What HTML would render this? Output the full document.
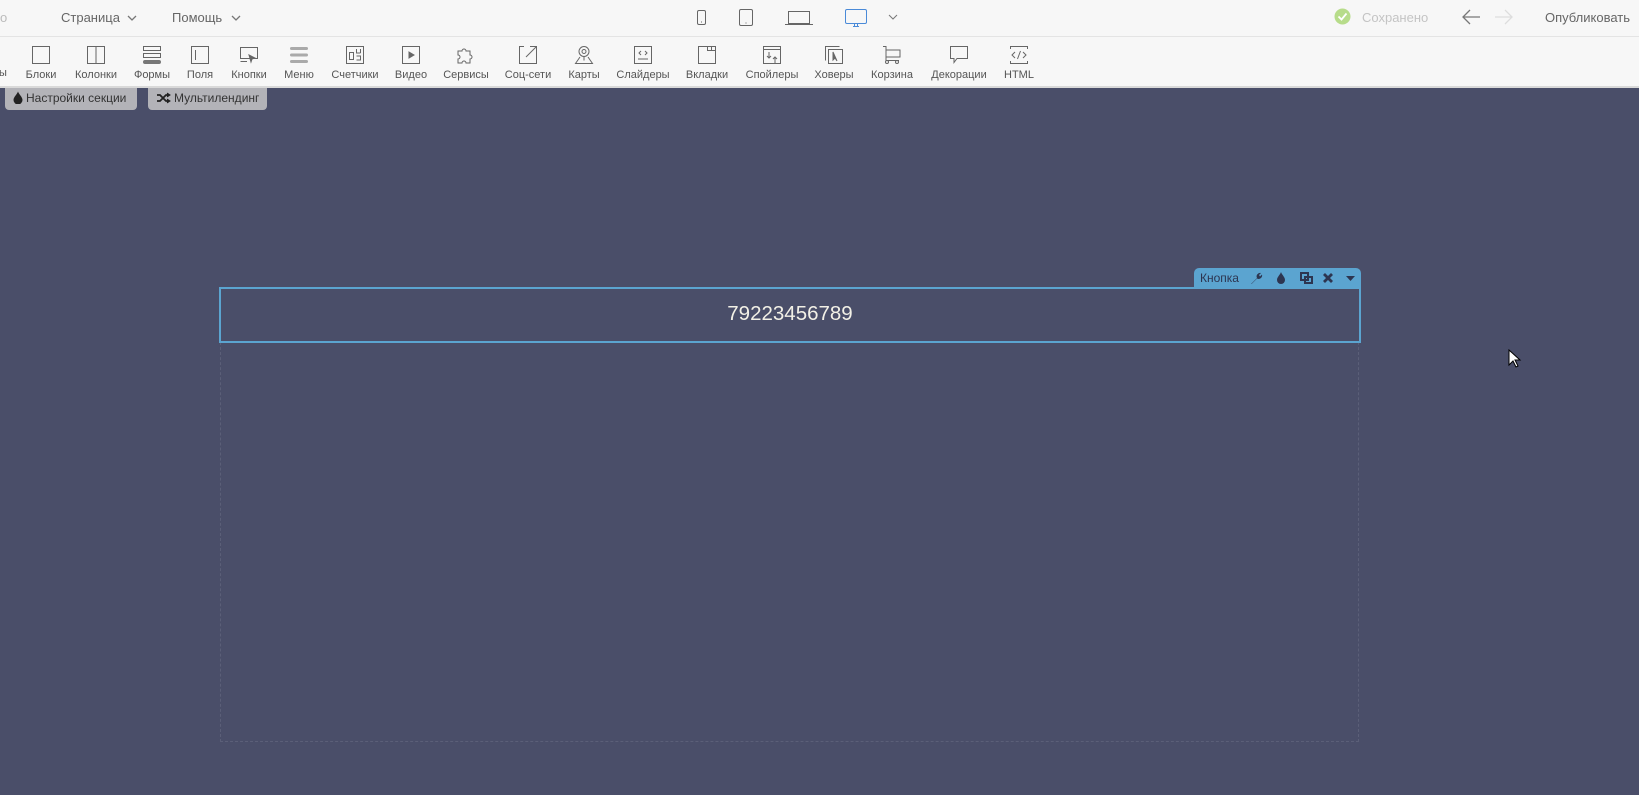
<!DOCTYPE html>
<html><head><meta charset="utf-8"><style>
*{margin:0;padding:0;box-sizing:border-box}
body{width:1639px;height:795px;overflow:hidden;background:#4a4e69;font-family:"Liberation Sans",sans-serif;position:relative}
.top{position:absolute;left:0;top:0;width:1639px;height:37px;background:#f7f7f7;border-bottom:1px solid #e4e4e4}
.tb{position:absolute;left:0;top:37px;width:1639px;height:51px;background:#f7f7f7;border-bottom:2px solid #d9d9d9}
.t{position:absolute;font-size:13px;color:#666;white-space:nowrap}
.it{position:absolute;top:8px;width:80px;text-align:center}
.it svg{display:block;margin:0 auto}
.it span{display:block;font-size:11px;color:#555;margin-top:4px;white-space:nowrap}
.chip{position:absolute;top:88px;height:22px;background:#b3b3b8;border-radius:0 0 4px 4px;font-size:12px;color:#333;line-height:21px;padding-left:8px;white-space:nowrap}
.chip svg{vertical-align:-2px;margin-right:3px}
</style></head><body>
<div class="top">
<div class="t" style="left:0;top:10px;color:#bbb">о</div>
<div class="t" style="left:61px;top:10px">Страница</div>
<svg style="position:absolute;left:127px;top:14px" width="10" height="8" fill="none" stroke="#777" stroke-width="1.3"><polyline points="1,2 5,6 9,2"/></svg>
<div class="t" style="left:172px;top:10px">Помощь</div>
<svg style="position:absolute;left:231px;top:14px" width="10" height="8" fill="none" stroke="#777" stroke-width="1.3"><polyline points="1,2 5,6 9,2"/></svg>
<svg style="position:absolute;left:690px;top:8px" width="220" height="20" viewBox="690 8 220 20" fill="none" stroke="#666" stroke-width="1">
<rect x="697.5" y="10.5" width="8" height="14" rx="1.5"/><line x1="701" y1="22" x2="702" y2="22"/>
<rect x="739.5" y="9.5" width="13" height="16" rx="1.5"/><line x1="745.5" y1="23" x2="746.5" y2="23"/>
<rect x="788.5" y="11.5" width="21" height="12"/><line x1="785" y1="24.5" x2="813" y2="24.5"/>
<g stroke="#4a8ad8"><rect x="845.5" y="9.5" width="21" height="14" rx="1.5"/><line x1="853" y1="26.5" x2="859" y2="26.5"/><line x1="854.5" y1="24" x2="854.5" y2="26"/><line x1="857.5" y1="24" x2="857.5" y2="26"/></g>
<polyline points="889,15 893,19 897,15" stroke="#777"/>
</svg>
<svg style="position:absolute;left:1334px;top:8px" width="17" height="17"><circle cx="8.5" cy="8.5" r="8" fill="#b7dc8a"/><polyline points="4.5,8.5 7.5,11.5 12.5,5.5" fill="none" stroke="#fff" stroke-width="1.8"/></svg>
<div class="t" style="left:1362px;top:10px;color:#c4c4c4">Сохранено</div>
<svg style="position:absolute;left:1462px;top:8px" width="52" height="18" fill="none" stroke-width="1.3"><g stroke="#777"><line x1="1" y1="9" x2="18" y2="9"/><polyline points="8,2 1,9 8,16"/></g><g stroke="#ddd"><line x1="33" y1="9" x2="50" y2="9"/><polyline points="43,2 50,9 43,16"/></g></svg>
<div class="t" style="left:1545px;top:10px">Опубликовать</div>
</div>
<div class="tb">
<div class="it" style="left:-37px"><svg width="18" height="18"></svg><span>ы</span></div>
<div class="it" style="left:1px"><svg width="20" height="20" fill="none" stroke="#666"><rect x="1.5" y="1.5" width="17" height="17"/></svg><span>Блоки</span></div>
<div class="it" style="left:56px"><svg width="20" height="20" fill="none" stroke="#666"><rect x="1.5" y="1.5" width="17" height="17"/><line x1="10" y1="1.5" x2="10" y2="18.5"/></svg><span>Колонки</span></div>
<div class="it" style="left:112px"><svg width="20" height="20" fill="none" stroke="#666"><rect x="1.5" y="1.5" width="17" height="4"/><rect x="1.5" y="8.5" width="17" height="4"/><rect x="1" y="15" width="18" height="4" fill="#777" stroke="none" rx="2"/></svg><span>Формы</span></div>
<div class="it" style="left:160px"><svg width="20" height="20" fill="none" stroke="#666"><rect x="1.5" y="1.5" width="17" height="17"/><line x1="5.5" y1="5" x2="5.5" y2="15"/></svg><span>Поля</span></div>
<div class="it" style="left:209px"><svg width="20" height="20" fill="none" stroke="#666"><rect x="1.5" y="2.5" width="17" height="11"/><line x1="1.5" y1="16.5" x2="8" y2="16.5"/><path d="M10 10l6 3-3 1-1 3z" fill="#666"/></svg><span>Кнопки</span></div>
<div class="it" style="left:259px"><svg width="20" height="20"><rect x="1" y="2" width="18" height="3" rx="1.5" fill="#aaa"/><rect x="1" y="8.5" width="18" height="3" rx="1.5" fill="#aaa"/><rect x="1" y="15" width="18" height="3" rx="1.5" fill="#aaa"/></svg><span>Меню</span></div>
<div class="it" style="left:315px"><svg width="20" height="20" fill="none" stroke="#666"><rect x="1.5" y="1.5" width="17" height="17"/><rect x="4.5" y="7.5" width="4" height="7"/><path d="M11.5 4v4h4M15.5 4v4M11.5 11h4v4h-4"/></svg><span>Счетчики</span></div>
<div class="it" style="left:371px"><svg width="20" height="20" fill="none" stroke="#666"><rect x="1.5" y="1.5" width="17" height="17"/><path d="M8 7l5 3-5 3z" fill="#666"/></svg><span>Видео</span></div>
<div class="it" style="left:426px"><svg width="20" height="20" fill="none" stroke="#666"><path d="M2 6h4a2 2 0 1 1 4 0h4v4a2 2 0 1 1 0 4v4h-4a2 2 0 1 0-4 0H2v-4a2 2 0 1 0 0-4z"/></svg><span>Сервисы</span></div>
<div class="it" style="left:488px"><svg width="20" height="20" fill="none" stroke="#666"><path d="M12 1.5H18.5V18.5H1.5V1.5H6"/><line x1="8" y1="12" x2="18" y2="2"/></svg><span>Соц-сети</span></div>
<div class="it" style="left:544px"><svg width="20" height="20" fill="none" stroke="#666"><circle cx="10" cy="6.5" r="5"/><circle cx="10" cy="6.5" r="2"/><path d="M10 11.5v4M6 12l-4.5 6.5h17L14 12"/></svg><span>Карты</span></div>
<div class="it" style="left:603px"><svg width="20" height="20" fill="none" stroke="#666"><rect x="1.5" y="1.5" width="17" height="17"/><path d="M8 6l-2 2 2 2M12 6l2 2-2 2M5 14h10"/></svg><span>Слайдеры</span></div>
<div class="it" style="left:667px"><svg width="20" height="20" fill="none" stroke="#666"><rect x="1.5" y="1.5" width="17" height="17"/><path d="M10.5 1.5v4h8M14.5 1.5v4"/></svg><span>Вкладки</span></div>
<div class="it" style="left:732px"><svg width="20" height="20" fill="none" stroke="#666"><rect x="1.5" y="1.5" width="17" height="17"/><path d="M1.5 4.5h17M7 7v6M5 11l2 2 2-2M13 18v-6M11 14l2-2 2 2"/></svg><span>Спойлеры</span></div>
<div class="it" style="left:794px"><svg width="20" height="20" fill="none" stroke="#666"><path d="M1.5 15.5V1.5h14"/><rect x="4.5" y="4.5" width="14" height="14"/><path d="M9 7v8l2-2 2 3z" fill="#666"/></svg><span>Ховеры</span></div>
<div class="it" style="left:852px"><svg width="20" height="20" fill="none" stroke="#666"><path d="M1 1.5h3v14h13M4 5h14v7H4"/><circle cx="5" cy="17" r="1.5"/><circle cx="15" cy="17" r="1.5"/></svg><span>Корзина</span></div>
<div class="it" style="left:919px"><svg width="20" height="20" fill="none" stroke="#666"><path d="M1.5 1.5h17v12H8l-3 4v-4H1.5z"/></svg><span>Декорации</span></div>
<div class="it" style="left:979px"><svg width="20" height="20" fill="none" stroke="#666"><path d="M1.5 4V1.5h17V4M1.5 16v2.5h17V16M6 7l-3 3 3 3M14 7l3 3-3 3M11.5 6l-3 8"/></svg><span>HTML</span></div>
</div>
<div class="chip" style="left:5px;width:132px"><svg width="10" height="13"><path d="M5 0.5c-1 3-4.5 5.5-4.5 8.5a4.5 4.5 0 0 0 9 0c0-3-3.5-5.5-4.5-8.5z" fill="#222"/></svg>Настройки секции</div>
<div class="chip" style="left:148px;width:119px"><svg width="15" height="12" fill="none" stroke="#222" stroke-width="1.8"><path d="M1 3h3l6 6h3M1 9h3l6-6h3"/><path d="M11 1l3 2-3 2M11 7l3 2-3 2" fill="#222" stroke-width="1"/></svg>Мультилендинг</div>
<div style="position:absolute;left:220px;top:342px;width:1139px;height:400px;border:1px dashed #5b5f78;border-top:none"></div>
<div style="position:absolute;left:1194px;top:268px;width:167px;height:21px;background:#5ba4d0;border-radius:5px 5px 0 0"></div>
<div style="position:absolute;left:1200px;top:271px;font-size:12px;color:#2d3550">Кнопка</div>
<svg style="position:absolute;left:1248px;top:270px" width="112" height="16">
<path d="M3 14l6-6a3.5 3.5 0 0 1 4-5l-2 2 1 1.5 2-2a3.5 3.5 0 0 1-5 4l-5.5 5.5z" fill="#2d3550"/>
<path d="M33 2c-1 3-4 5-4 8a4 4 0 0 0 8 0c0-3-3-5-4-8z" fill="#2d3550"/>
<g fill="none" stroke="#2d3550" stroke-width="2"><rect x="53" y="3" width="7" height="7"/><rect x="57" y="7" width="7" height="6"/></g>
<path d="M76 4l8 8M84 4l-8 8" stroke="#2d3550" stroke-width="2.8"/>
<path d="M98 6h9l-4.5 5z" fill="#2d3550"/>
</svg>
<div style="position:absolute;left:219px;top:287px;width:1142px;height:56px;border:2px solid #5ba4d0"></div>
<div style="position:absolute;left:219px;top:302px;width:1142px;text-align:center;font-size:20.5px;color:#f2f0e6;font-family:'Liberation Sans',sans-serif">79223456789</div>
<svg style="position:absolute;left:1508px;top:349px" width="14" height="20"><path d="M1 1v15l4-4 3 6 2-1-3-6h5z" fill="#fff" stroke="#000"/></svg>
</body></html>
